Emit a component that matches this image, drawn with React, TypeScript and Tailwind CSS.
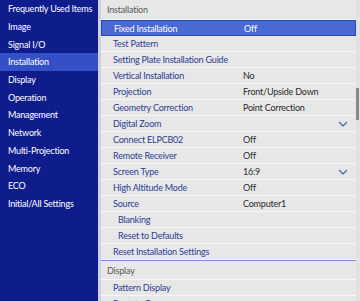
import { ReactNode } from "react";

const menuItems = [
  "Frequently Used Items",
  "Image",
  "Signal I/O",
  "Installation",
  "Display",
  "Operation",
  "Management",
  "Network",
  "Multi-Projection",
  "Memory",
  "ECO",
  "Initial/All Settings",
];

type Row = {
  label: string;
  value?: string;
  indent?: boolean;
  chevron?: boolean;
  active?: boolean;
};

const rows: Row[] = [
  { label: "Fixed Installation", value: "Off", active: true },
  { label: "Test Pattern" },
  { label: "Setting Plate Installation Guide" },
  { label: "Vertical Installation", value: "No" },
  { label: "Projection", value: "Front/Upside Down" },
  { label: "Geometry Correction", value: "Point Correction" },
  { label: "Digital Zoom", chevron: true },
  { label: "Connect ELPCB02", value: "Off" },
  { label: "Remote Receiver", value: "Off" },
  { label: "Screen Type", value: "16:9", chevron: true },
  { label: "High Altitude Mode", value: "Off" },
  { label: "Source", value: "Computer1" },
  { label: "Blanking", indent: true },
  { label: "Reset to Defaults", indent: true },
  { label: "Reset Installation Settings" },
];

function Chevron() {
  return (
    <svg width="10" height="6" viewBox="0 0 10 6" className="absolute right-[8px] top-[5px]">
      <path d="M1 1 L5 5 L9 1" fill="none" stroke="#4a5cb0" strokeWidth="1.2" />
    </svg>
  );
}

function SettingRow({ row }: { row: Row }) {
  return (
    <div
      className={`relative shrink-0 flex items-center h-4 ${
        row.active
          ? "bg-[#4a69d2] border border-[#2a45b5] text-white"
          : "bg-[#e7e7e7] border-b border-[#f8f8f8] text-[#2e3c92]"
      }`}
    >
      <span className={`${row.indent ? "pl-[17px]" : "pl-[12px]"} w-[142px] shrink-0 whitespace-nowrap`}>
        {row.label}
      </span>
      {row.value && (
        <span className={row.active ? "text-white" : "text-[#2a2a2a]"}>{row.value}</span>
      )}
      {row.chevron && <Chevron />}
    </div>
  );
}

function Header({ children, tall }: { children: ReactNode; tall?: boolean }) {
  return (
    <div
      className={`shrink-0 flex items-center pl-[6px] text-[#5a5a5a] bg-[#e7e7e7] border-b border-[#f8f8f8] ${
        tall ? "h-5" : "h-[19px]"
      }`}
    >
      {children}
    </div>
  );
}

export default function App() {
  return (
    <div
      className="flex w-[360px] h-[301px] overflow-hidden bg-[#dcdcdc] text-[9px] leading-none tracking-[-0.2px]"
      style={{ fontFamily: "Lato, 'Open Sans', sans-serif" }}
    >
      {/* left menu */}
      <div className="w-[98px] shrink-0 bg-[#0f1d8c]">
        {menuItems.map((item) => (
          <div
            key={item}
            className={`h-[17.7px] flex items-center pl-[8px] text-white whitespace-nowrap ${
              item === "Installation" ? "bg-[#3550c6]" : ""
            }`}
          >
            {item}
          </div>
        ))}
      </div>

      <div className="w-[3px] shrink-0 bg-[#cfd0d8]" />

      {/* settings list */}
      <div className="flex-1 flex flex-col bg-[#e7e7e7]">
        <Header tall>Installation</Header>
        {rows.map((row) => (
          <SettingRow key={row.label} row={row} />
        ))}
        <div className="h-px shrink-0 bg-[#7a8ad6]" />
        <Header>Display</Header>
        <SettingRow row={{ label: "Pattern Display" }} />
        <SettingRow row={{ label: "Remote Camera" }} />
      </div>

      {/* scrollbar */}
      <div className="w-[4px] shrink-0 bg-[#e2e2e2] flex flex-col">
        <div className="h-[88px]" />
        <div className="h-[32px] w-[3px] bg-[#8a8a8a]" />
      </div>
    </div>
  );
}
